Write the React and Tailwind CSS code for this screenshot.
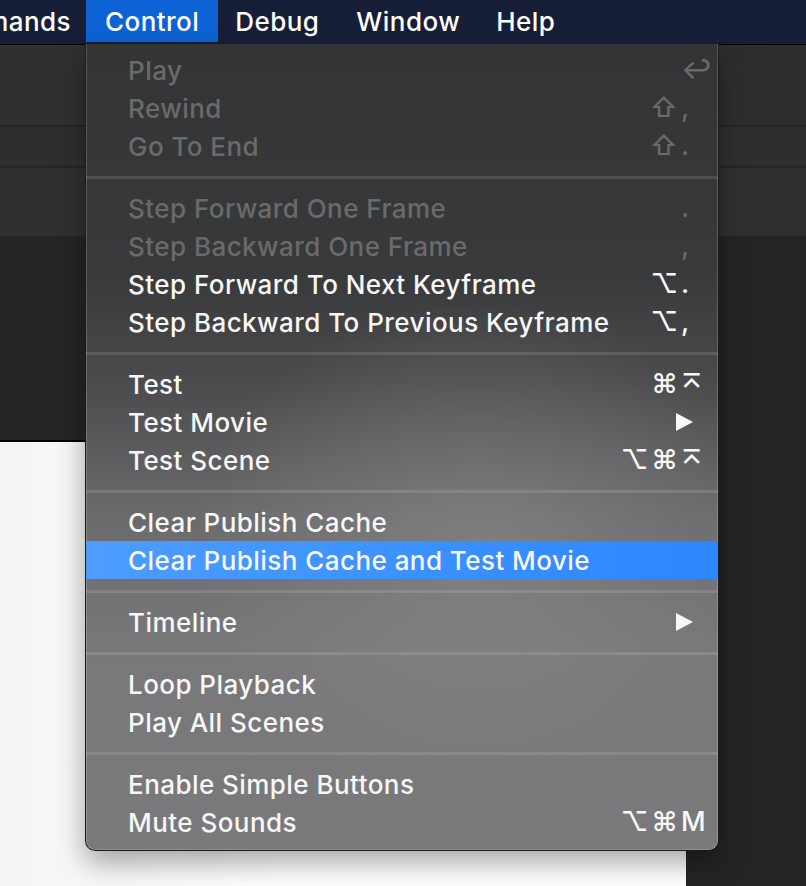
import React from 'react';

const groups = [
  [
    { label: 'Play', key: '↩', disabled: true },
    { label: 'Rewind', mods: '⇧', key: ',', disabled: true },
    { label: 'Go To End', mods: '⇧', key: '.', disabled: true },
  ],
  [
    { label: 'Step Forward One Frame', key: '.', disabled: true },
    { label: 'Step Backward One Frame', key: ',', disabled: true },
    { label: 'Step Forward To Next Keyframe', mods: '⌥', key: '.' },
    { label: 'Step Backward To Previous Keyframe', mods: '⌥', key: ',' },
  ],
  [
    { label: 'Test', mods: '⌘', key: '⌅' },
    { label: 'Test Movie', submenu: true },
    { label: 'Test Scene', mods: '⌥⌘', key: '⌅' },
  ],
  [
    { label: 'Clear Publish Cache' },
    { label: 'Clear Publish Cache and Test Movie', active: true },
  ],
  [{ label: 'Timeline', submenu: true }],
  [{ label: 'Loop Playback' }, { label: 'Play All Scenes' }],
  [
    { label: 'Enable Simple Buttons' },
    { label: 'Mute Sounds', mods: '⌥⌘', key: 'M' },
  ],
];

function MenuRow({ item }) {
  const color = item.disabled ? 'text-[#6a6a6b]' : 'text-[#f7f7f7]';
  const bg = item.active ? 'bg-[linear-gradient(to_right,#4d9dff,#2c86ff)]' : '';
  return (
    <div className={`flex items-center h-[38px] pl-[42px] pr-[9px] ${color} ${bg}`}>
      <span className="flex-1 whitespace-nowrap">{item.label}</span>
      {item.submenu ? (
        <svg width="18" height="20" viewBox="0 0 18 20" className="mr-[15px]">
          <path d="M0 1 L17 10 L0 19 Z" fill="currentColor" />
        </svg>
      ) : (
        <>
          <span className="text-right whitespace-nowrap text-[27px] tracking-[3px]">{item.mods}</span>
          <span className="w-[28px] whitespace-nowrap text-[27px]">{item.key}</span>
        </>
      )}
    </div>
  );
}

function Separator() {
  return (
    <div className="h-[24px] flex items-center">
      <div className="h-[3px] w-full bg-white/12" />
    </div>
  );
}

export default function App() {
  return (
    <div className="relative w-[806px] h-[886px] overflow-hidden bg-[#232323] font-['Inter','DejaVu_Sans',sans-serif] font-medium tracking-[0.45px]">
      {/* menu bar */}
      <div className="flex h-[45px] pb-[2px] bg-[#171e37] text-white text-[26px] overflow-hidden border-b border-black">
        <div className="flex items-center w-[86px] overflow-hidden">
          <span className="whitespace-nowrap -ml-[74px]">Commands</span>
        </div>
        <div className="flex items-center px-[19px] bg-[#0d63d6]">Control</div>
        <div className="flex items-center pl-[17px] pr-[19px]">Debug</div>
        <div className="flex items-center px-[18px]">Window</div>
        <div className="flex items-center px-[18px]">Help</div>
      </div>

      {/* background panels */}
      <div className="h-[82px] bg-[linear-gradient(to_right,#303030,#2d2d2d)] border-b-2 border-[#262626]" />
      <div className="h-[41px] bg-[#2e2e2e] border-b-2 border-[#262626]" />
      <div className="h-[68px] bg-[#303030]" />
      <div className="flex">
        <div className="w-[686px]">
          <div className="h-[206px] bg-[#252525] border-b-2 border-black" />
          <div className="h-[450px] bg-[linear-gradient(to_right,#f4f4f4,#ffffff_40%)]" />
        </div>
        <div className="flex-1 bg-[#242424]" />
      </div>

      {/* dropdown */}
      <div className="absolute left-[85px] top-[44px] w-[634px] pt-[7px] pb-[9px] border border-[#1b1b1b] border-t-0 rounded-b-[10px] overflow-hidden shadow-[0_12px_28px_rgba(0,0,0,0.35),inset_1px_0_0_rgba(255,255,255,0.18),inset_-1px_0_0_rgba(255,255,255,0.18),inset_0_-1px_0_rgba(255,255,255,0.15)] bg-[radial-gradient(ellipse_45%_30%_at_62%_62%,rgba(140,140,142,0.55),transparent),linear-gradient(to_bottom,#333436_0%,#38393b_28%,#4b4b4d_42%,#6a6a6c_58%,#78787a_75%,#7a7a7c_100%)] text-[26px]">
        {groups.map((g, gi) => (
          <React.Fragment key={gi}>
            {gi > 0 && <Separator />}
            {g.map((item) => (
              <MenuRow key={item.label} item={item} />
            ))}
          </React.Fragment>
        ))}
      </div>
    </div>
  );
}
